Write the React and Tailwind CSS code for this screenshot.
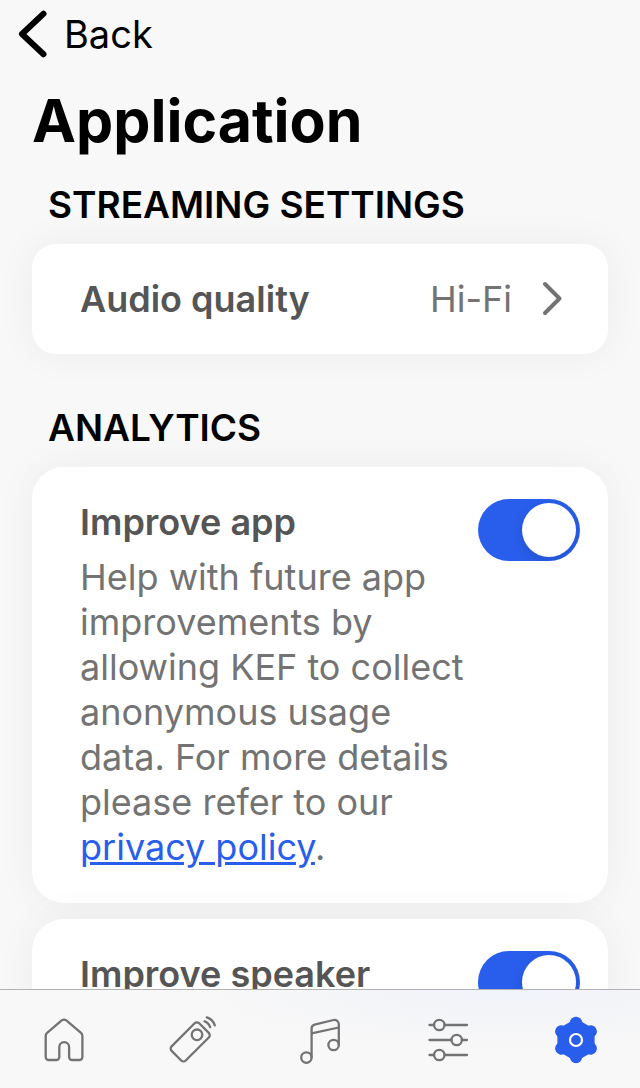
import { useState } from "react";

const gearLobes = [0, 60, 120, 180, 240, 300];

function HomeIcon() {
  return (
    <svg viewBox="0 0 48 48" className="size-12" fill="none" stroke="currentColor" strokeWidth="2.3">
      <path d="M8.7 44h7.6a3 3 0 0 0 3-3V31a4.9 4.9 0 0 1 9.8 0v10a3 3 0 0 0 3 3h7.3a3 3 0 0 0 3-3V19.8a4 4 0 0 0-1.4-3L26.6 4.7a4 4 0 0 0-5.2 0L7.1 16.8a4 4 0 0 0-1.4 3V41a3 3 0 0 0 3 3z" />
    </svg>
  );
}

function RemoteIcon() {
  return (
    <svg viewBox="0 0 48 48" className="size-12" fill="none" stroke="currentColor" strokeWidth="2.3" strokeLinecap="round">
      <rect x="-19.5" y="-10" width="39" height="20" rx="3.2" transform="translate(22.2 25.9) rotate(-45)" />
      <circle cx="29" cy="18.8" r="5.3" />
      <path d="M36.6 5.3c2.8 1 4.7 3 5.6 5.9" />
      <path d="M38.8 1.4c4 1.3 6.8 4.1 8 8" />
    </svg>
  );
}

function MusicIcon() {
  return (
    <svg viewBox="0 0 48 48" className="size-12" fill="none" stroke="currentColor" strokeWidth="2.3">
      <circle cx="10.4" cy="41.6" r="5.2" />
      <circle cx="37.6" cy="29" r="5.2" />
      <path d="M15.6 41.7V12.5a4 4 0 0 1 3-3.8L37.5 4a4.3 4.3 0 0 1 5.3 4.2V29" />
      <path d="M15.6 17.3L42.8 11.5" />
    </svg>
  );
}

function SlidersIcon() {
  return (
    <svg viewBox="0 0 48 48" className="size-12" fill="none" stroke="currentColor" strokeWidth="2.3" strokeLinecap="round">
      <path d="M5.5 9H10M20.6 9H43M5.5 24H27.4M38 24h5M5.5 39H10M20.6 39H43" />
      <circle cx="15.3" cy="9" r="5.2" />
      <circle cx="32.7" cy="24" r="5.2" />
      <circle cx="15.3" cy="39" r="5.2" />
    </svg>
  );
}

function GearIcon() {
  return (
    <svg viewBox="0 0 48 48" className="size-12" fill="currentColor">
      <path d="M24 2.5L42.6 13.2V34.8L24 45.5L5.4 34.8V13.2z" />
      {gearLobes.map((angle) => (
        <circle key={angle} cx="24" cy="7" r="6.2" transform={`rotate(${angle} 24 24)`} />
      ))}
      <circle cx="24" cy="24" r="6" fill="none" stroke="white" strokeWidth="2.2" />
    </svg>
  );
}

const tabs = [
  { name: "Home", Icon: HomeIcon },
  { name: "Remote", Icon: RemoteIcon },
  { name: "Music", Icon: MusicIcon },
  { name: "Sound", Icon: SlidersIcon },
  { name: "Settings", Icon: GearIcon },
];

function Toggle({ id, checked, onChange }) {
  return (
    <input
      id={id}
      type="checkbox"
      role="switch"
      checked={checked}
      onChange={(e) => onChange(e.target.checked)}
      className="h-[62px] w-[102px] shrink-0 cursor-pointer appearance-none overflow-hidden rounded-full bg-gray-300 p-1 transition-colors before:block before:size-[54px] before:rounded-full before:bg-white before:shadow-[0_4px_12px_rgba(0,0,0,0.12)] before:content-[''] checked:bg-[#285eeb] checked:before:translate-x-10"
    />
  );
}

function SectionTitle({ children }) {
  return <h2 className="px-4 text-[37px] leading-[46px] font-semibold">{children}</h2>;
}

function ToggleCard({ id, title, children }) {
  const [on, setOn] = useState(true);

  return (
    <div className="flex items-start justify-between rounded-[32px] bg-white pt-8 pr-7 pb-[33px] pl-12 shadow-[0_0_40px_rgba(0,0,0,0.05)]">
      <div className="min-w-0 flex-1">
        <label htmlFor={id} className="block text-[36px] leading-[46px] font-semibold text-[#555]">
          {title}
        </label>
        <p className="mt-[10px] text-[36px] leading-[45px] text-[#737373]">{children}</p>
      </div>
      <Toggle id={id} checked={on} onChange={setOn} />
    </div>
  );
}

export default function App() {
  const [active, setActive] = useState("Settings");

  return (
    <div className="flex h-screen flex-col bg-[#f8f8f8] font-['Inter',sans-serif] text-black">
      <main className="min-h-0 flex-1 overflow-hidden px-8">
        <button type="button" className="-ml-4 flex h-[68px] items-center gap-4 text-[38px]">
          <svg viewBox="0 0 32 48" className="h-12 w-8" fill="none" stroke="currentColor" strokeWidth="6" strokeLinecap="round" strokeLinejoin="round">
            <path d="M27.5 3.8L6 24L27.5 44.2" />
          </svg>
          Back
        </button>

        <h1 className="mt-4 text-[59px] leading-[74px] font-bold">Application</h1>

        <section className="mt-6">
          <SectionTitle>STREAMING SETTINGS</SectionTitle>
          <button
            type="button"
            className="mt-4 flex h-[110px] w-full items-center rounded-3xl bg-white pr-10 pl-12 text-[36px] shadow-[0_0_40px_rgba(0,0,0,0.05)]"
          >
            <span className="flex-1 text-left font-semibold text-[#555]">Audio quality</span>
            <span className="text-[#737373]">Hi-Fi</span>
            <svg viewBox="0 0 32 40" className="ml-6 h-10 w-8 text-[#737373]" fill="none" stroke="currentColor" strokeWidth="4" strokeLinecap="round" strokeLinejoin="round">
              <path d="M9 5L23.5 19.5L9 34" />
            </svg>
          </button>
        </section>

        <section className="mt-[51px]">
          <SectionTitle>ANALYTICS</SectionTitle>
          <div className="mt-4 flex flex-col gap-4">
            <ToggleCard id="improve-app" title="Improve app">
              Help with future app improvements by allowing KEF to collect anonymous usage data. For
              more details please refer to our{" "}
              <a href="#privacy" className="text-[#285eeb] underline">
                privacy policy
              </a>
              .
            </ToggleCard>
            <ToggleCard id="improve-speaker" title="Improve speaker" />
          </div>
        </section>
      </main>

      <nav className="flex items-start justify-around border-t border-[#b2b2b2] bg-[radial-gradient(ellipse_at_80%_0%,#f0f3fa_0%,#f4f5f8_20%,#f8f8f8_45%)] pt-[26px] pb-6">
        {tabs.map(({ name, Icon }) => (
          <button
            key={name}
            type="button"
            aria-label={name}
            onClick={() => setActive(name)}
            className={active === name ? "text-[#285eeb]" : "text-[#737373]"}
          >
            <Icon />
          </button>
        ))}
      </nav>
    </div>
  );
}
